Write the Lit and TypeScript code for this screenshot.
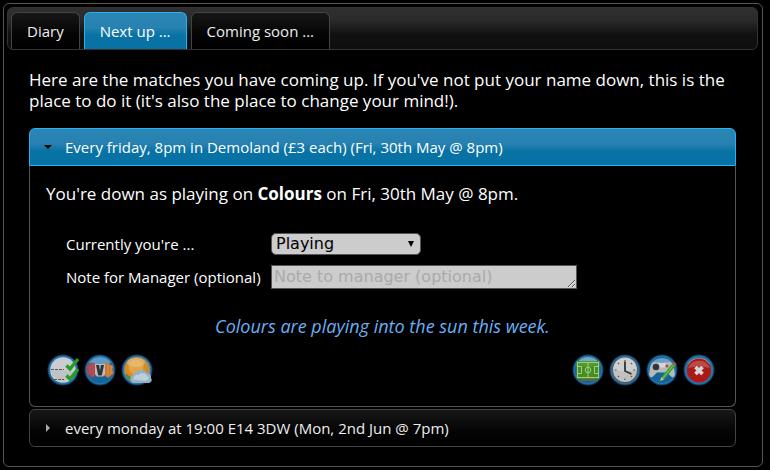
import { LitElement, html, css, svg } from "lit";
import { customElement, property, state } from "lit/decorators.js";
import { classMap } from "lit/directives/class-map.js";

const glyphs: Record<string, unknown> = {
  checklist: svg`
    <circle cx="16" cy="16" r="12.8" fill="#c9ccd0"/>
    <path d="M4 17 A12.5 12.5 0 0 0 28 19 Q16 14 4 17Z" fill="#bcbfc2" opacity=".7"/>
    <path d="M4 15.5H17M7 25.5H17" stroke="#555" stroke-width="1" stroke-dasharray="3 1"/>
    <path d="M19.5 11.5l3.5 3.500 8-10" fill="none" stroke="#2b9a22" stroke-width="3.4"/>
    <path d="M19.5 21.5l3.5 3.500 8-10" fill="none" stroke="#2b9a22" stroke-width="3.4"/>`,
  versus: svg`
    <circle cx="16" cy="16" r="13" fill="#14639b"/>
    <path d="M5 9a13 13 0 0 1 22 0q-11 4-22 0z" fill="#5f9dc4"/>
    <path d="M3 12l2.500-3 3-.5 4.500 2.500v10l-4 2.500-4-1.500-2-3z" fill="#a9454c"/>
    <path d="M19 11.500l4.500-3.500 2.500 2.500 3 1.500-.5 4 1.500 3-3.500 3-2 2-5.500-3z" fill="#c97b36"/>
    <path d="M6 11v9M9 10v12" stroke="#c66d6f" stroke-width="1" opacity=".6"/>
    <path d="M24 10v12M27 12v8" stroke="#e0a35e" stroke-width="1" opacity=".6"/>
    <path d="M11 10h10v10l-2 2.500h-6l-2-2.500z" fill="#b9bec2"/>
    <path d="M12 11h3.200l.8 6 .9-6h3.100l-2.200 10.500h-3.600z" fill="#303235"/>`,
  weather: svg`
    <circle cx="16" cy="16" r="13" fill="#b98d4b"/>
    <path d="M4 20a13 13 0 0 0 14 9l-2-7z" fill="#4d8c46"/>
    <circle cx="15" cy="14" r="10.500" fill="#d98c22"/>
    <circle cx="15" cy="13" r="7.500" fill="#e6a544"/>
    <ellipse cx="15" cy="8.500" rx="9" ry="4.500" fill="#e6c48c" opacity=".6"/>
    <path d="M12 29a4 4 0 0 1-.5-7.500 4 4 0 0 1 4-3.500 6 6 0 0 1 10 1 4 4 0 0 1 4.500 5 3 3 0 0 1-2 5z" fill="#92b0c6"/>
    <path d="M12.500 26a4 4 0 0 1 5-5 5 5 0 0 1 8 0l3 3-3 3z" fill="#bccddb"/>`,
  pitch: svg`
    <circle cx="16" cy="16" r="13" fill="#14639b"/>
    <path d="M5 9a13 13 0 0 1 22 0z" fill="#74a9c9"/>
    <path d="M6 25h20l-4 2H10z" fill="#6b5f45"/>
    <rect x="4.500" y="7" width="23" height="18" fill="#458f22"/>
    <rect x="4.500" y="7" width="23" height="6" fill="#5ba036" opacity=".6"/>
    <rect x="5.500" y="8.500" width="21" height="15" fill="none" stroke="#a4cc87"/>
    <path d="M16 8.500v15M5.500 12.500h4v7h-4M26.500 12.500h-4v7h4" fill="none" stroke="#a4cc87"/>
    <circle cx="16" cy="16" r="2.800" fill="none" stroke="#a4cc87"/>`,
  clock: svg`
    <circle cx="16" cy="16" r="13.300" fill="#56595b"/>
    <circle cx="16" cy="16" r="12" fill="#bfc0c1"/>
    <path d="M4.500 15a11.500 11.500 0 0 1 23 0q-11 5-23 0z" fill="#cecfcf"/>
    <path d="M16 6v1.500M16 24.500V26M6 16h1.500M24.500 16H26M9 9l1 1M23 9l-1 1M9 23l1-1M23 23l-1-1" stroke="#555" stroke-width="1.200"/>
    <path d="M16 7.500v9.500l6.500 3" fill="none" stroke="#333" stroke-width="1.800"/>`,
  game: svg`
    <circle cx="16" cy="16" r="13" fill="#14639b"/>
    <path d="M5 10a13 13 0 0 1 22 0z" fill="#6ba3c7"/>
    <path d="M9 8q7 2 14 0 4 0 5 5.500l1 7q-1 4-4 2l-4-4H11l-4 4q-3 2-4-2l1-7q1-5.500 5-5.500z" fill="#b6b8ba"/>
    <path d="M12 8.500q4 1.500 8 0l-1 5h-6z" fill="#d7d7d7"/>
    <circle cx="10" cy="13" r="3.300" fill="#34373a"/>
    <circle cx="21" cy="12" r="1.500" fill="#b44"/>
    <circle cx="24" cy="15" r="1.500" fill="#b47a32"/>
    <path d="M14 27l1.500-4L26.500 9.500l3 2.500L18 25.500z" fill="#3aa334"/>
    <path d="M26.500 9.500l1.500-1.500 2.500 2-1 2z" fill="#cf4b43"/>
    <path d="M14 27l1.500-4 2.500 2.500z" fill="#d0b78d"/>
    <path d="M17 24L27.500 11" stroke="#80cf70" stroke-width=".8"/>`,
  remove: svg`
    <circle cx="16" cy="16" r="13" fill="#3d6f92"/>
    <path d="M5 10a13 13 0 0 1 22 0z" fill="#8fb0c4"/>
    <circle cx="16" cy="16.500" r="12" fill="#ab1a17"/>
    <path d="M5 14a12 12 0 0 1 22 0q-11-3-22 0z" fill="#bb4b46"/>
    <path d="M12.500 13l7 7M19.500 13l-7 7" stroke="#d6d6d6" stroke-width="3.800"/>`,
};

@customElement("round-icon")
export class RoundIcon extends LitElement {
  @property() name = "";

  static styles = css`
    :host {
      display: block;
    }
    .icon {
      display: block;
      width: 32px;
      height: 32px;
    }
  `;

  render() {
    return html`<svg class="icon" viewBox="0 0 32 32" aria-hidden="true">
      <circle cx="16" cy="16" r="15.500" fill="#0a3b60" />
      <circle cx="16" cy="16" r="14.500" fill="#2473a8" />
      ${glyphs[this.name]}
    </svg>`;
  }
}

@customElement("app-root")
export class AppRoot extends LitElement {
  @state() private tab = "Next up ...";
  @state() private status = "Playing";

  private tabs = ["Diary", "Next up ...", "Coming soon ..."];
  private leftTools = [
    ["checklist", "Availability"],
    ["versus", "Teams"],
    ["weather", "Weather"],
  ];
  private rightTools = [
    ["pitch", "Pitch"],
    ["clock", "Kick-off time"],
    ["game", "Edit game"],
    ["remove", "Cancel game"],
  ];

  static styles = css`
    :host {
      display: block;
      box-sizing: border-box;
      min-height: 100vh;
      padding: 3px 7px 4px 3px;
      background: #000;
      color: #fff;
      font-family: "Segoe UI", "Open Sans", "Noto Sans", sans-serif;
      font-size: 17px;
      line-height: 22px;
    }
    * {
      box-sizing: border-box;
    }
    button {
      font: inherit;
      color: inherit;
      cursor: pointer;
    }
    .panel {
      border: 1px solid #555;
      border-radius: 6px;
    }
    .tabs {
      display: flex;
      gap: 4px;
      margin: 3px 4px 0 3px;
      padding: 4px 3px 0;
      border: 1px solid #333;
      border-radius: 6px;
      background: linear-gradient(#303030, #2a2a2a 30%, #111 65%, #0e0e0e);
    }
    .tab {
      height: 37px;
      padding: 0 15px;
      border: 1px solid #444;
      border-bottom: 0;
      border-radius: 6px 6px 0 0;
      background: linear-gradient(#171717, #040404 60%, #000);
      color: #eee;
      font-size: 15px;
      white-space: nowrap;
    }
    .active {
      border-color: #26b3f7;
      background: linear-gradient(#2a85b5, #2782b1 40%, #0972a5 62%);
      color: #fff;
    }
    .content {
      padding: 19px 26px 19px 25px;
    }
    .intro {
      margin: 0 0 17px;
      line-height: 21px;
    }
    .heading {
      margin: 0;
      font-size: 15px;
      font-weight: normal;
    }
    .toggle {
      display: flex;
      align-items: center;
      width: 100%;
      height: 38px;
      padding: 0 14px;
      border: 1px solid #444;
      border-radius: 6px;
      background: linear-gradient(#171717, #040404 60%, #000);
      color: #eee;
      text-align: left;
    }
    .open {
      border-color: #26b3f7;
      border-radius: 6px 6px 0 0;
      background: linear-gradient(#2a85b5, #2782b1 40%, #0972a5 62%);
      color: #fff;
    }
    .arrow {
      width: 8px;
      height: 8px;
      margin-right: 13px;
      fill: #aaa;
    }
    .open .arrow {
      fill: #000;
    }
    .body {
      margin-bottom: 2px;
      padding: 17px 16px 20px;
      border: 1px solid #555;
      border-top: 0;
      border-radius: 0 0 6px 6px;
    }
    .status {
      margin: 0 0 28px;
    }
    .form {
      display: grid;
      grid-template-columns: 195px 1fr;
      column-gap: 10px;
      row-gap: 10px;
      align-items: center;
      margin-left: 20px;
      font-size: 15px;
    }
    .form label {
      white-space: nowrap;
    }
    .pick {
      position: relative;
      width: 150px;
    }
    .field {
      display: block;
      margin: 0;
      border: 1px solid #555;
      background: #ccc;
      color: #000;
      font-family: Verdana, "DejaVu Sans", sans-serif;
      font-size: 16px;
      line-height: 20px;
    }
    .select {
      width: 100%;
      height: 22px;
      padding: 0 4px;
      border-radius: 5px;
      appearance: none;
    }
    .drop {
      position: absolute;
      right: 6px;
      top: 7px;
      width: 8px;
      height: 8px;
      pointer-events: none;
    }
    .note {
      width: 306px;
      height: 24px;
      padding: 1px 2px;
      overflow: hidden;
      resize: both;
    }
    .note::placeholder {
      color: #aaa;
    }
    .news {
      margin: 26px 0 17px;
      color: #69aff5;
      font-size: 18px;
      font-style: italic;
      text-align: center;
    }
    .tools,
    .group {
      display: flex;
      justify-content: space-between;
    }
    .tools {
      padding: 0 4px 0 1px;
    }
    .group {
      gap: 5px;
    }
    .tool {
      display: block;
      padding: 0;
      border: 0;
      background: none;
    }
  `;

  private group(tools: string[][]) {
    return html`<div class="group">
      ${tools.map(
        ([name, label]) => html`<button class="tool" aria-label=${label}>
          <round-icon name=${name}></round-icon>
        </button>`
      )}
    </div>`;
  }

  render() {
    return html`
      <main class="panel">
        <div class="tabs" role="tablist">
          ${this.tabs.map(
            (t) => html`<button
              role="tab"
              aria-selected=${t === this.tab}
              class=${classMap({ tab: true, active: t === this.tab })}
              @click=${() => (this.tab = t)}
            >${t}</button>`
          )}
        </div>
        <section class="content" role="tabpanel">
          <p class="intro">
            Here are the matches you have coming up. If you've not put your name
            down, this is the place to do it (it's also the place to change your
            mind!).
          </p>
          <h3 class="heading">
            <button class="toggle open" aria-expanded="true">
              <svg class="arrow" viewBox="0 0 8 8"><path d="M0 2h8L4 6z" /></svg>
              Every friday, 8pm in Demoland (£3 each) (Fri, 30th May @ 8pm)
            </button>
          </h3>
          <div class="body">
            <p class="status">
              You're down as playing on <b>Colours</b> on Fri, 30th May @ 8pm.
            </p>
            <div class="form">
              <label for="state">Currently you're ...</label>
              <div class="pick">
                <select
                  id="state"
                  class="field select"
                  @change=${(e: Event) =>
                    (this.status = (e.target as HTMLSelectElement).value)}
                >
                  <option>Playing</option>
                  <option>Not playing</option>
                </select>
                <svg class="drop" viewBox="0 0 8 8"><path d="M1 1h6L4 7z" /></svg>
              </div>
              <label for="note">Note for Manager (optional)</label>
              <textarea
                id="note"
                class="field note"
                rows="1"
                placeholder="Note to manager (optional)"
              ></textarea>
            </div>
            <p class="news">Colours are playing into the sun this week.</p>
            <div class="tools">
              ${this.group(this.leftTools)} ${this.group(this.rightTools)}
            </div>
          </div>
          <h3 class="heading">
            <button class="toggle" aria-expanded="false">
              <svg class="arrow" viewBox="0 0 8 8"><path d="M2 0l4 4-4 4z" /></svg>
              every monday at 19:00 E14 3DW (Mon, 2nd Jun @ 7pm)
            </button>
          </h3>
        </section>
      </main>
    `;
  }
}
